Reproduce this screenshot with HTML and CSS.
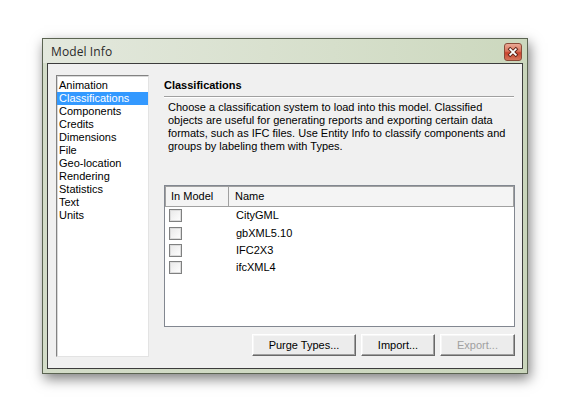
FILE: index.html
```html
<!DOCTYPE html>
<html>
<head>
<meta charset="utf-8">
<link rel="stylesheet" href="styles.css">
</head>
<body>
<div class="window">
  <div class="titlebar">
    <span class="title">Model Info</span>
    <span class="close">
      <svg width="18" height="18" viewBox="0 0 18 18">
        <path d="M6.2 6.2 L11.8 11.8 M11.8 6.2 L6.2 11.8" stroke="#5a2418" stroke-width="3.6" stroke-linecap="square"/>
        <path d="M6.2 6.2 L11.8 11.8 M11.8 6.2 L6.2 11.8" stroke="#ffffff" stroke-width="1.8" stroke-linecap="square"/>
      </svg>
    </span>
  </div>
  <div class="client">
    <ul class="nav">
      <li>Animation</li>
      <li class="sel">Classifications</li>
      <li>Components</li>
      <li>Credits</li>
      <li>Dimensions</li>
      <li>File</li>
      <li>Geo-location</li>
      <li>Rendering</li>
      <li>Statistics</li>
      <li>Text</li>
      <li>Units</li>
    </ul>
    <div class="panel">
      <h2 class="heading">Classifications</h2>
      <p class="desc">Choose a classification system to load into this model. Classified<br>objects are useful for generating reports and exporting certain data<br>formats, such as IFC files. Use Entity Info to classify components and<br>groups by labeling them with Types.</p>
      <div class="table">
        <div class="thead">
          <div class="th c1">In Model</div>
          <div class="th c2">Name</div>
        </div>
        <div class="tbody">
          <div class="row"><span class="cb"></span><span class="name">CityGML</span></div>
          <div class="row"><span class="cb"></span><span class="name">gbXML5.10</span></div>
          <div class="row"><span class="cb"></span><span class="name">IFC2X3</span></div>
          <div class="row"><span class="cb"></span><span class="name">ifcXML4</span></div>
        </div>
      </div>
      <div class="buttons">
        <button class="btn b1">Purge Types...</button>
        <button class="btn b2">Import...</button>
        <button class="btn b3 disabled">Export...</button>
      </div>
    </div>
  </div>
</div>
</body>
</html>
```

FILE: styles.css
```css
html, body {
  margin: 0;
  padding: 0;
  background: #ffffff;
}
body {
  width: 561px;
  height: 397px;
  overflow: hidden;
  padding: 38px 0 0 42px;
  box-sizing: border-box;
  font-family: "Liberation Sans", Arial, sans-serif;
  font-size: 11px;
  color: #000;
}
.window {
  width: 486px;
  height: 336px;
  box-sizing: border-box;
  border: 1px solid #5b6452;
  background: linear-gradient(90deg, #d3dcc8 0%, #c9d5bb 100%);
  padding: 0 4px 4px 4px;
  display: flex;
  flex-direction: column;
  box-shadow: 2px 5px 12px rgba(0,0,0,0.5);
}
.titlebar {
  height: 24px;
  display: flex;
  align-items: center;
  justify-content: space-between;
  background: linear-gradient(90deg, #e3e8dd 0%, #d6dfcb 60%, #ccd8be 100%);
  margin: 0 -4px;
  padding: 0 5px 0 8px;
}
.title {
  font-family: "Open Sans", "Noto Sans", sans-serif;
  font-size: 12px;
  color: #2a2a2a;
  letter-spacing: 0.1px;
}
.close {
  width: 18px;
  height: 18px;
  box-sizing: border-box;
  border: 1px solid #8a4a38;
  border-radius: 3px;
  background: linear-gradient(180deg, #eaa995 0%, #d9735c 45%, #c9432c 55%, #d6765c 100%);
  display: flex;
  align-items: center;
  justify-content: center;
  margin-top: 2px;
}
.close svg {
  display: block;
  margin: -1px;
}
.client {
  flex: 1;
  border: 1px solid #3c3c3c;
  background: #f0f0f0;
  padding: 11px 7px 11px 8px;
  display: flex;
}
.nav {
  list-style: none;
  margin: 0;
  padding: 3px 0 0 0;
  width: 93px;
  box-sizing: border-box;
  background: #fff;
  border: 1px solid;
  border-color: #828282 #e3e3e3 #e3e3e3 #828282;
  box-shadow: inset 1px 1px 0 #d8d8d8;
}
.nav li {
  line-height: 13px;
  height: 13px;
  padding-left: 2px;
  white-space: nowrap;
}
.nav li.sel {
  background: #3399ff;
  color: #fff;
}
.panel {
  flex: 1;
  margin-left: 15px;
  display: flex;
  flex-direction: column;
}
.heading {
  margin: 0;
  font-size: 11px;
  font-weight: bold;
  line-height: 13px;
  padding: 4px 0 4px 0;
  border-bottom: 1px solid #a0a0a0;
  box-shadow: 0 1px 0 #ffffff;
  margin-right: 1px;
}
.desc {
  margin: 4px 0 32px 4px;
  line-height: 13px;
  white-space: nowrap;
}
.table {
  flex: 1;
  width: 351px;
  box-sizing: border-box;
  border: 1px solid #828790;
  background: #fff;
  display: flex;
  flex-direction: column;
}
.thead {
  display: flex;
  height: 21px;
  box-sizing: border-box;
  border: 1px solid #a0a0a0;
  background: #f4f4f4;
}
.th {
  line-height: 19px;
  box-sizing: border-box;
}
.c1 {
  width: 63px;
  padding-left: 5px;
  border-right: 1px solid #a0a0a0;
}
.c2 {
  padding-left: 6px;
}
.tbody {
  padding-top: 0;
}
.row {
  height: 17.4px;
  display: flex;
  align-items: center;
  padding-left: 4px;
}
.cb {
  width: 13px;
  height: 13px;
  box-sizing: border-box;
  border: 1px solid #7f8080;
  background: linear-gradient(135deg, #e8e8e8 0%, #ffffff 100%);
  box-shadow: inset 0 0 0 1px #dcdcdc;
}
.name {
  margin-left: 54px;
  line-height: 13px;
}
.buttons {
  display: flex;
  justify-content: flex-end;
  gap: 5px;
  margin-top: 7px;
  margin-bottom: 1px;
}
.btn {
  height: 22px;
  box-sizing: border-box;
  font-family: "Liberation Sans", Arial, sans-serif;
  font-size: 11px;
  color: #000;
  background: #ececec;
  border: 1px solid;
  border-color: #ffffff #696969 #696969 #ffffff;
  box-shadow: inset -1px -1px 0 #a0a0a0, inset 1px 1px 0 #f6f6f6;
  padding: 0;
  margin: 0;
}
.b1 { width: 104px; }
.b2 { width: 74px; }
.b3 { width: 75px; }
.btn.disabled {
  color: #a0a0a0;
}
```
